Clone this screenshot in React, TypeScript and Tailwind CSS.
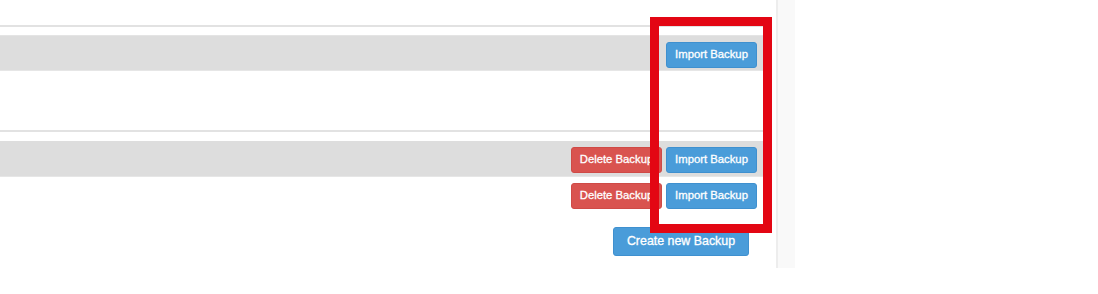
import React from "react";

function Btn({ color, children, big }: { color: "blue" | "red"; children: React.ReactNode; big?: boolean }) {
  const c =
    color === "blue"
      ? "bg-[#4a9cd9] border-[#3f90cf]"
      : "bg-[#d9534f] border-[#cf4a46]";
  const size = big
    ? "w-[136px] h-[29px] text-[12.4px] rounded-[3px]"
    : "w-[91px] h-[26px] text-[11.3px] rounded-[3px]";
  return (
    <button
      className={`${c} ${size} border text-white flex items-center justify-center leading-none shrink-0 [-webkit-text-stroke:0.3px_#ffffff]`}
      style={{ fontFamily: '"Liberation Sans", Arial, sans-serif' }}
    >
      {children}
    </button>
  );
}

export default function App() {
  return (
    <div className="relative w-[1098px] h-[294px] bg-white flex overflow-hidden">
      <div className="w-[765px] shrink-0 flex flex-col">
        <div className="h-[25px]" />
        <div className="h-[1.5px] bg-[#e2e2e2]" />
        <div className="h-[8.5px]" />
        <div className="h-[36px] bg-[#dddddd] border-t border-b border-t-[#e4e4e4] border-b-[#e6e6e6] flex justify-end items-start pt-[6px] pr-[8px]">
          <Btn color="blue">Import Backup</Btn>
        </div>
        <div className="h-[59px]" />
        <div className="h-[1.5px] bg-[#e2e2e2]" />
        <div className="h-[9.5px]" />
        <div className="h-[36px] bg-[#dddddd] border-b border-b-[#e6e6e6] flex justify-end items-start gap-[4px] pt-[6px] pr-[8px]">
          <Btn color="red">Delete Backup</Btn>
          <Btn color="blue">Import Backup</Btn>
        </div>
        <div className="h-[37px] flex justify-end items-start gap-[4px] pt-[6px] pr-[8px]">
          <Btn color="red">Delete Backup</Btn>
          <Btn color="blue">Import Backup</Btn>
        </div>
        <div className="flex justify-end pt-[13px] pr-[16px]">
          <Btn color="blue" big>
            Create new Backup
          </Btn>
        </div>
      </div>
      <div className="w-[11px] shrink-0" />
      <div className="w-[2px] h-[268px] bg-[#ededed] shrink-0" />
      <div className="w-[17px] h-[268px] bg-[#f9f9f9] shrink-0" />

      <div className="absolute left-[650px] top-[17px] w-[122px] h-[216px] border-[9px] border-[#e30613]" />
    </div>
  );
}
